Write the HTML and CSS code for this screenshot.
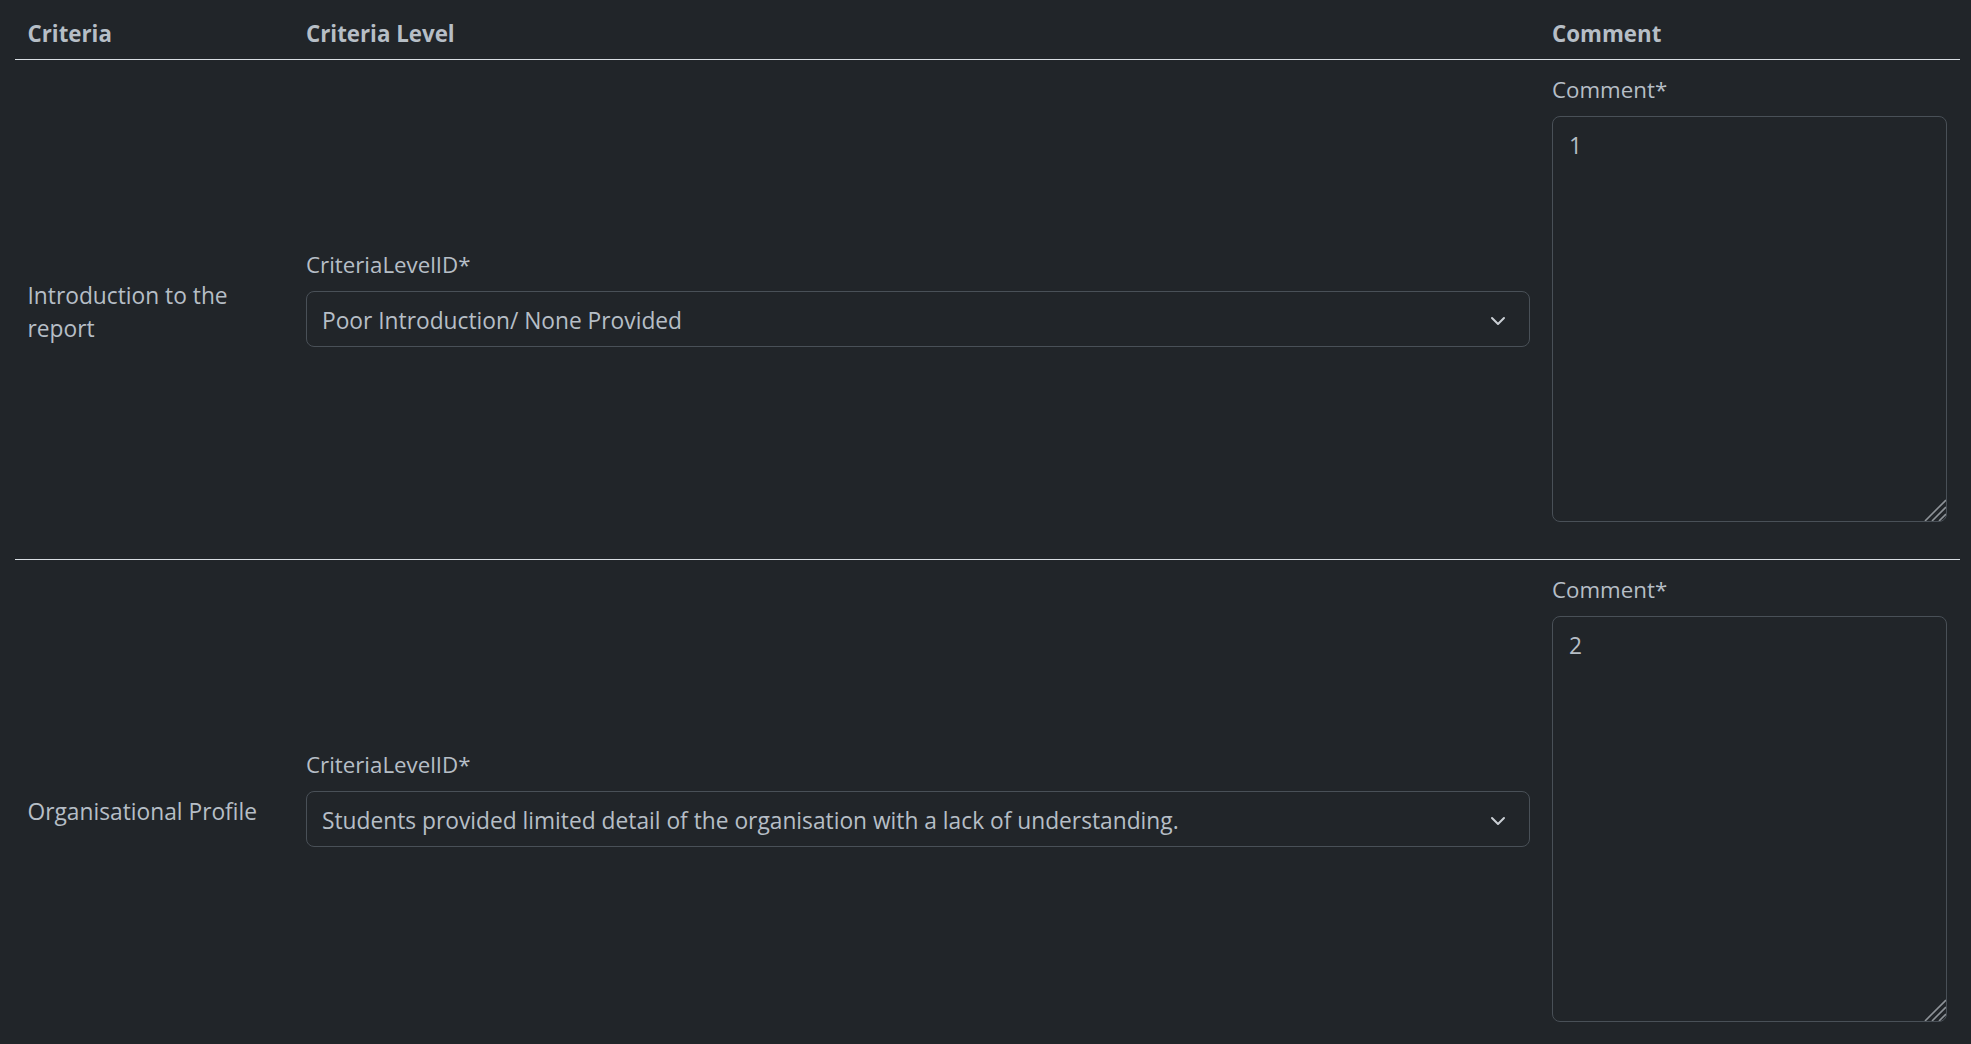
FILE: index.html
```html
<!DOCTYPE html>
<html lang="en">
<head>
<meta charset="utf-8">
<title>Criteria</title>
<link rel="stylesheet" href="styles.css">
</head>
<body>
<div class="page">
  <table class="grid">
    <colgroup>
      <col class="col-criteria">
      <col class="col-level">
      <col class="col-comment">
    </colgroup>
    <thead>
      <tr>
        <th class="first">Criteria</th>
        <th>Criteria Level</th>
        <th>Comment</th>
      </tr>
    </thead>
    <tbody>
      <tr>
        <td class="crit">Introduction to the report</td>
        <td>
          <div class="field">
            <label class="lbl">CriteriaLevelID*</label>
            <div class="select">
              <span class="select-text">Poor Introduction/ None Provided</span>
              <svg class="chev" viewBox="0 0 16 16" width="16" height="16"><path d="m2 5 6 6 6-6" fill="none" stroke="currentColor" stroke-width="2" stroke-linecap="round" stroke-linejoin="round"/></svg>
            </div>
          </div>
        </td>
        <td class="cmt">
          <div class="field">
            <label class="lbl">Comment*</label>
            <div class="ta-wrap">
              <textarea class="ta">1</textarea>
              <svg class="grip" viewBox="0 0 22 22" width="22" height="22"><path d="M1 22 22 1M8 22 22 8M15 22 22 15" stroke="#8e9398" stroke-width="1.6" fill="none"/></svg>
            </div>
          </div>
        </td>
      </tr>
      <tr>
        <td class="crit">Organisational Profile</td>
        <td>
          <div class="field">
            <label class="lbl">CriteriaLevelID*</label>
            <div class="select">
              <span class="select-text">Students provided limited detail of the organisation with a lack of understanding.</span>
              <svg class="chev" viewBox="0 0 16 16" width="16" height="16"><path d="m2 5 6 6 6-6" fill="none" stroke="currentColor" stroke-width="2" stroke-linecap="round" stroke-linejoin="round"/></svg>
            </div>
          </div>
        </td>
        <td class="cmt">
          <div class="field">
            <label class="lbl">Comment*</label>
            <div class="ta-wrap">
              <textarea class="ta">2</textarea>
              <svg class="grip" viewBox="0 0 22 22" width="22" height="22"><path d="M1 22 22 1M8 22 22 8M15 22 22 15" stroke="#8e9398" stroke-width="1.6" fill="none"/></svg>
            </div>
          </div>
        </td>
      </tr>
    </tbody>
  </table>
</div>
</body>
</html>
```

FILE: styles.css
```css
html, body {
  margin: 0;
  background: #212529;
  color-scheme: dark;
}
body {
  font-family: "Open Sans", "Noto Sans", sans-serif;
  font-size: 22.75px;
  line-height: 33px;
  color: #b6bec6;
  overflow: hidden;
}
.page {
  padding: 4px 11px 0 15px;
}
.grid {
  width: 1945px;
  border-collapse: collapse;
  table-layout: fixed;
}
.col-criteria { width: 280px; }
.col-level { width: 1246px; }
.col-comment { width: 419px; }
.grid th {
  text-align: left;
  font-size: 22.3px;
  font-weight: 700;
  padding: 12.5px 11px 9.5px;
  vertical-align: bottom;
  border-bottom: 1px solid #d9dee3;
}
.grid th.first {
  padding-left: 12.5px;
}
.grid td {
  padding: 11px;
  vertical-align: middle;
  border-bottom: 1px solid #d9dee3;
}
.grid td.crit {
  padding: 15px 11px 11px 12.5px;
}
.grid td.cmt {
  padding-right: 13px;
}
.field {
  margin-bottom: 26px;
}
.lbl {
  display: block;
  font-size: 22.3px;
  padding-top: 2px;
  margin-bottom: 10px;
}
.select {
  display: flex;
  align-items: center;
  height: 56px;
  box-sizing: border-box;
  padding: 3px 23.5px 0 15px;
  border: 1px solid #495057;
  border-radius: 8px;
}
.select-text {
  flex: 1;
  white-space: nowrap;
  overflow: hidden;
}
.chev {
  flex: none;
  color: #c9ced4;
}
.ta-wrap {
  position: relative;
}
.ta {
  display: block;
  width: 100%;
  height: 406px;
  box-sizing: border-box;
  margin: 0;
  padding: 12px 16px 8px;
  font: inherit;
  color: inherit;
  background: #212529;
  border: 1px solid #495057;
  border-radius: 8px;
  resize: none;
  outline: none;
}
.grip {
  position: absolute;
  right: 1px;
  bottom: 1px;
  pointer-events: none;
}
```
